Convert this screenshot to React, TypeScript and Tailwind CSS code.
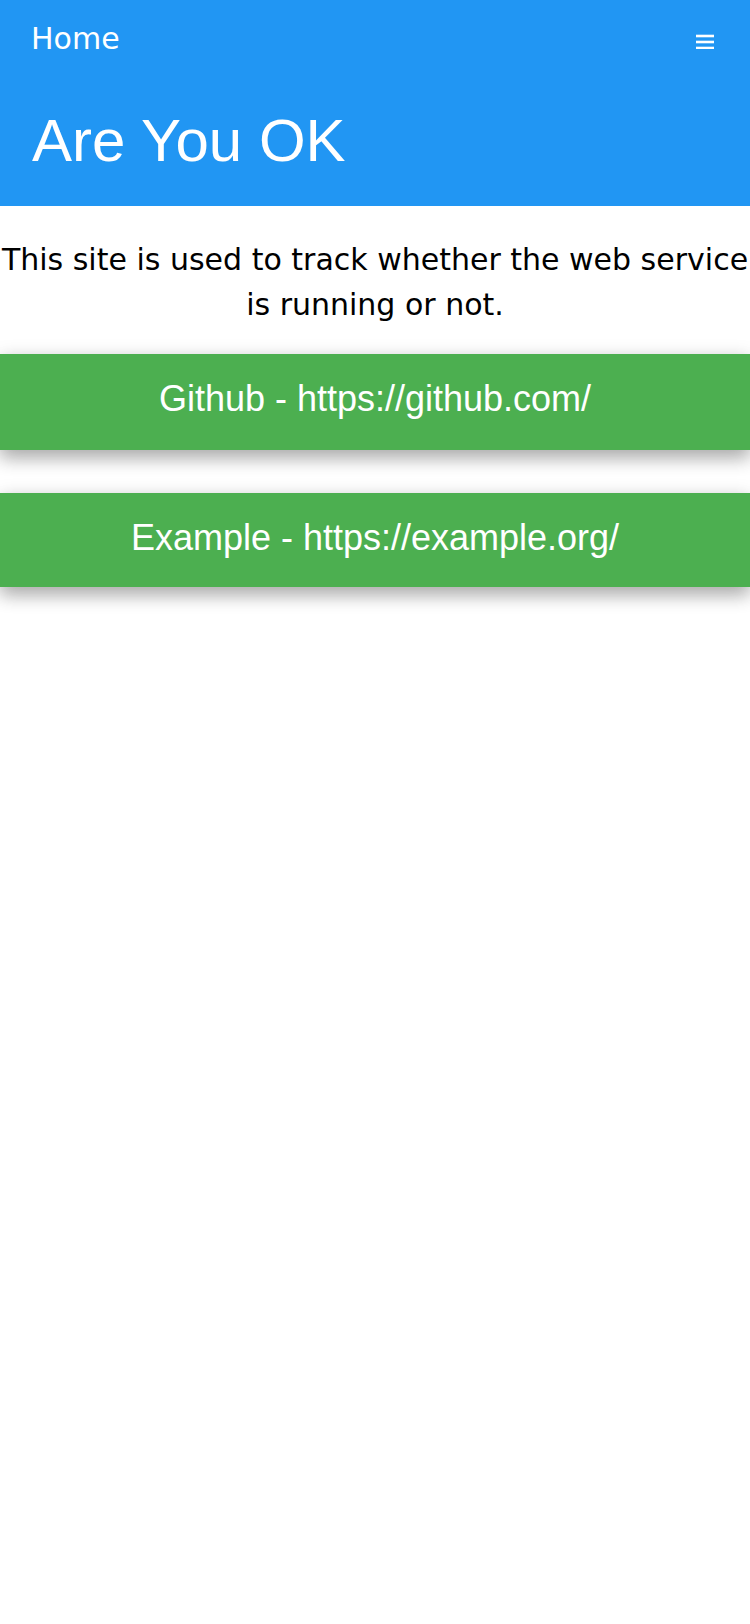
const sites = [
  { name: "Github", url: "https://github.com/", h: "h-[96px]" },
  { name: "Example", url: "https://example.org/", h: "h-[94px]" },
];

export default function App() {
  return (
    <div className="min-h-screen w-[750px] bg-white">
      <header className="h-[206px] bg-[#2196F3] text-white">
        <div className="flex items-start justify-between pl-[31px] pr-[36px] pt-[16px]">
          <span className="font-['DejaVu_Sans',sans-serif] text-[30px] leading-[45px]">Home</span>
          <svg width="18" height="15" viewBox="0 0 18 15" className="mt-[18px]" fill="white">
            <rect x="0" y="0.7" width="18" height="2.6" />
            <rect x="0" y="6.7" width="18" height="2.6" />
            <rect x="0" y="12.7" width="18" height="2.6" />
          </svg>
        </div>
        <h1 className="mt-[46px] pl-[32px] font-['Liberation_Sans',Arial,sans-serif] text-[60px] leading-[68px]">
          Are You OK
        </h1>
      </header>

      <p className="pt-[31px] text-center font-['DejaVu_Sans',sans-serif] text-[30px] leading-[45px] text-black">
        This site is used to track whether the web service is running or not.
      </p>

      <div className="mt-[27px] flex flex-col gap-[43px]">
        {sites.map((site) => (
          <div
            key={site.name}
            className={`${site.h} bg-[#4CAF50] pt-[18px] text-center font-['Liberation_Sans',Arial,sans-serif] text-[36px] leading-[54px] text-white shadow-[0_8px_16px_0_rgba(0,0,0,0.2),0_6px_20px_0_rgba(0,0,0,0.19)]`}
          >
            {site.name} - {site.url}
          </div>
        ))}
      </div>
    </div>
  );
}
